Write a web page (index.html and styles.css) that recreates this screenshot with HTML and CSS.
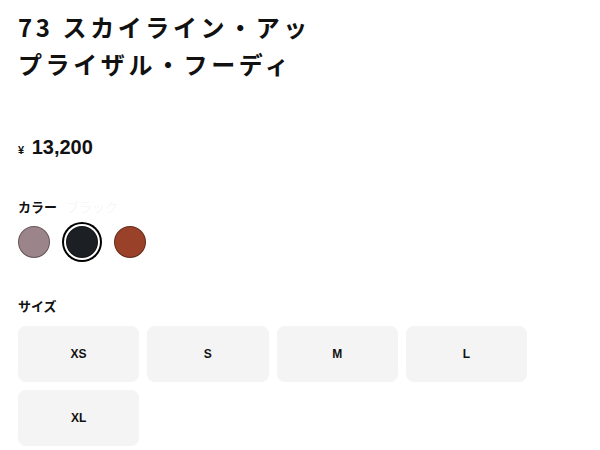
FILE: index.html
```html
<!DOCTYPE html>
<html lang="ja">
<head>
<meta charset="utf-8">
<link rel="stylesheet" href="styles.css">
</head>
<body>
<div class="product">
  <h1 class="title">73 スカイライン・アップライザル・フーディ</h1>
  <div class="price"><span class="yen">¥</span> 13,200</div>
  <div class="label">カラー <span class="color-name">ブラック</span></div>
  <div class="swatches">
    <span class="swatch mauve"></span>
    <span class="swatch black selected"></span>
    <span class="swatch rust"></span>
  </div>
  <div class="label size-label">サイズ</div>
  <div class="sizes">
    <div class="size">XS</div>
    <div class="size">S</div>
    <div class="size">M</div>
    <div class="size">L</div>
    <div class="size">XL</div>
  </div>
</div>
</body>
</html>
```
FILE: styles.css
```css
html, body {
  margin: 0;
  padding: 0;
  background: #ffffff;
}
body {
  font-family: "Liberation Sans", "Noto Sans CJK JP", sans-serif;
  color: #111111;
}
.product {
  padding: 0 18px;
}
.title {
  margin: 8px 0 0;
  width: 302px;
  font-family: "Noto Sans CJK JP", sans-serif;
  font-size: 24px;
  line-height: 37px;
  font-weight: 700;
  letter-spacing: 3.6px;
  color: #111111;
}
.price {
  margin-top: 53px;
  font-family: "Liberation Sans", "Noto Sans CJK JP", sans-serif;
  font-size: 20px;
  line-height: 24px;
  font-weight: 700;
}
.yen {
  font-size: 11px;
  margin-right: 2px;
}
.label {
  margin-top: 35px;
  font-family: "Noto Sans CJK JP", sans-serif;
  font-size: 13px;
  line-height: 20px;
  font-weight: 700;
}
.color-name {
  color: #f7f7f7;
  font-weight: 400;
  margin-left: 6px;
}
.swatches {
  margin-top: 5px;
  height: 40px;
  display: flex;
  align-items: center;
  gap: 16px;
}
.swatch {
  width: 32px;
  height: 32px;
  box-sizing: border-box;
  border-radius: 50%;
  border: 1px solid rgba(0, 0, 0, 0.35);
}
.mauve { background: #9c848b; }
.black { background: #1c2025; }
.rust { background: #9a4229; }
.selected {
  box-shadow: 0 0 0 2px #ffffff, 0 0 0 4px #000000;
}
.size-label {
  margin-top: 34px;
}
.sizes {
  margin-top: 10px;
  width: 509px;
  display: grid;
  grid-template-columns: repeat(4, 1fr);
  gap: 8px;
}
.size {
  height: 56px;
  background: #f4f4f4;
  border-radius: 8px;
  display: flex;
  align-items: center;
  justify-content: center;
  font-size: 12px;
  font-weight: 700;
  color: #111111;
}
```
